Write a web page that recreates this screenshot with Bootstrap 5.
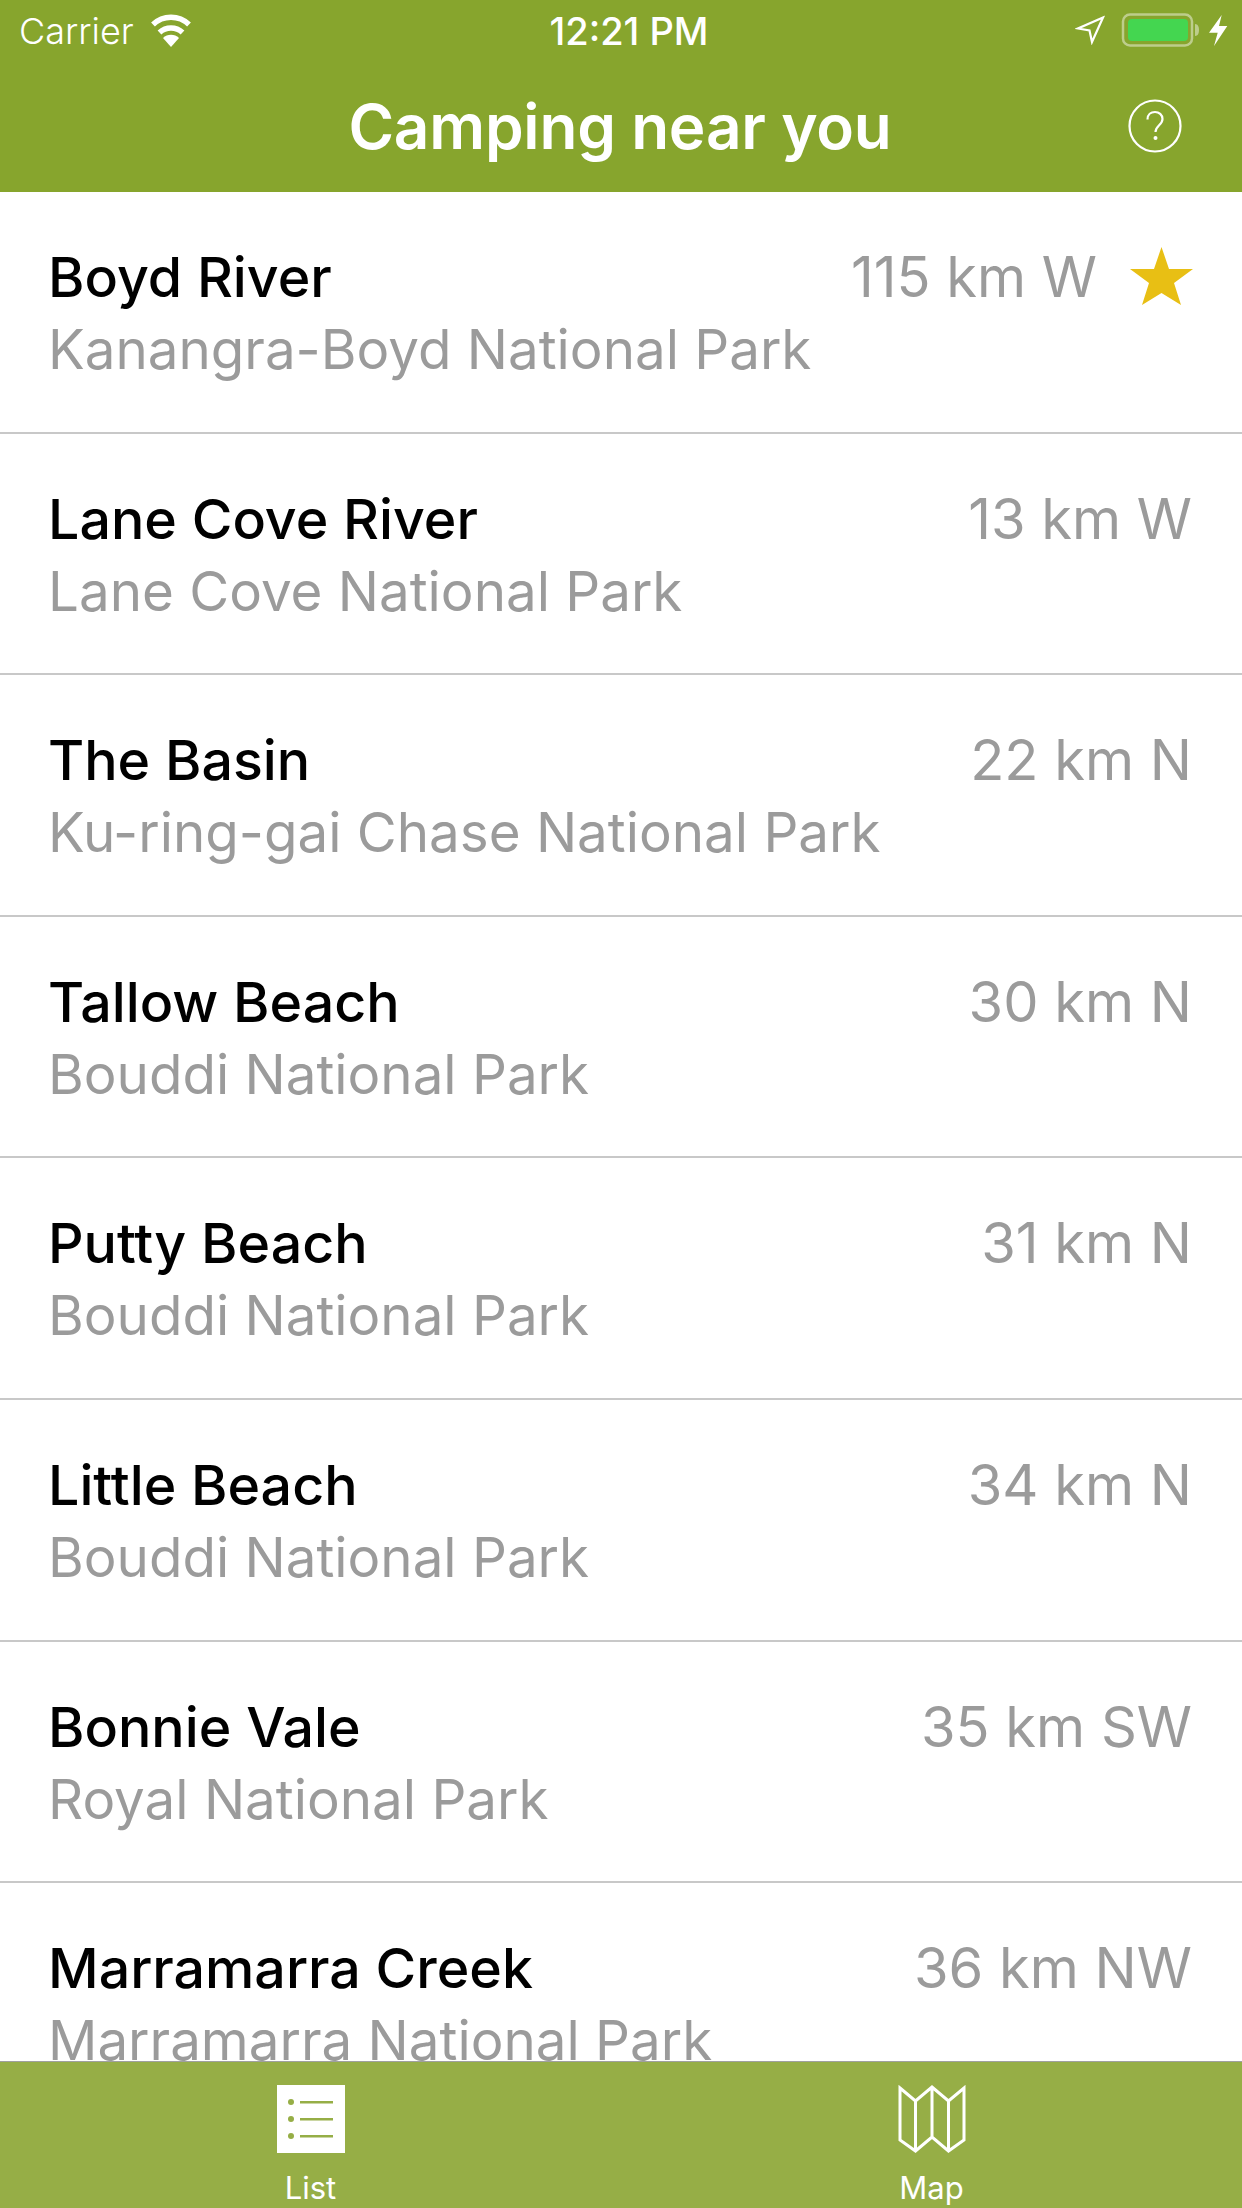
<!DOCTYPE html>
<html lang="en">
<head>
    <meta charset="UTF-8">
    <title>Camping near you</title>
    <link href="https://cdn.jsdelivr.net/npm/bootstrap@5.3.0/dist/css/bootstrap.min.css" rel="stylesheet">
    <style>
        body { font-family: Inter, "Liberation Sans", sans-serif; background: #fff; }
        .phone-page { width: 1242px; height: 2208px; overflow: hidden; }
        .top-area { background: #87a52d; height: 192px; color: #fff; flex: none; }
        .status-line { height: 60px; padding: 0 14px 0 19px; line-height: 62px; }
        .status-side { width: 400px; }
        .status-carrier { font-weight: 300; font-size: 36px; padding-top: 2px; }
        .status-time { font-weight: 500; font-size: 38px; margin-left: 11px; padding-top: 2px; }
        .title-line { height: 132px; padding: 0 60px 0 0; }
        .page-title { font-size: 62px; font-weight: 600; margin: 2px 0 0 0; line-height: 1; flex: 1; text-align: center; padding-left: 112px; letter-spacing: -.2px; }
        .camp-list { flex: 1; min-height: 0; overflow: hidden; }
        .camp-row { height: 241.6px; padding: 0 50px 0 48px; border-bottom: 2px solid #c8c8c8; flex: none; }
        .camp-text { padding-top: 49px; }
        .camp-name { font-size: 55.5px; font-weight: 500; color: #000; line-height: 72px; }
        .camp-park { font-size: 54.7px; color: #9b9b9b; line-height: 72px; }
        .camp-dist { font-size: 56px; color: #9b9b9b; line-height: 72px; padding-top: 49px; }
        .camp-star { margin: 55px -1px 0 33px; }
        .tab-bar { background: #96ae46; height: 147px; flex: none; border-top: 1px solid #a0a0a0; color: #fff; }
        .tab-item { flex: 1; padding-top: 23px; font-size: 31px; line-height: 1; }
        .tab-label { margin-top: 19px; }
    </style>
</head>
<body>
    <div class="phone-page d-flex flex-column">
        <div class="top-area">
            <div class="status-line d-flex justify-content-between align-items-center">
                <div class="status-side d-flex align-items-center gap-3">
                    <span class="status-carrier">Carrier</span>
                    <svg width="42" height="35" viewBox="0 0 42 35"><path d="M21 34l-8-9a11.500 11.500 0 0 1 16 0z" fill="#fff"/><path d="M9.500 19.500a17 17 0 0 1 23 0M3 11.500a26 26 0 0 1 36 0" fill="none" stroke="#fff" stroke-width="5.500"/></svg>
                </div>
                <span class="status-time">12:21 PM</span>
                <div class="status-side d-flex align-items-center justify-content-end">
                    <svg width="30" height="30" viewBox="0 0 30 30" class="me-3"><path d="M28 2.500L3 13.500l11.500 2 2.500 11.500z" fill="none" stroke="#fff" stroke-width="2.200"/></svg>
                    <svg width="80" height="34" viewBox="0 0 80 34"><rect x="2" y="1.500" width="69" height="31" rx="7" fill="none" stroke="#fff" stroke-opacity=".45" stroke-width="2.500"/><rect x="7" y="6" width="60" height="22" rx="4" fill="#44d650"/><path d="M74 11c3 0 4 3 4 6s-1 6-4 6z" fill="#fff" fill-opacity=".45"/></svg>
                    <svg width="19" height="31" viewBox="0 0 19 31" class="ms-2"><path d="M12.700 0L0 17.700h8.700L5 31l13.300-20H10z" fill="#fff"/></svg>
                </div>
            </div>
            <div class="title-line d-flex align-items-center">
                <h1 class="page-title">Camping near you</h1>
                <svg width="54" height="54" viewBox="0 0 54 54"><circle cx="27" cy="27" r="25.500" fill="none" stroke="#fff" stroke-width="2.200"/><path d="M19.500 20.500c0-5 3.500-7.500 7.500-7.500s7.500 2.800 7.500 7c0 6-7 6.500-7 13" fill="none" stroke="#fff" stroke-width="2.200"/><circle cx="27.500" cy="39" r="2" fill="#fff"/></svg>
            </div>
        </div>

        <div class="camp-list d-flex flex-column" id="campList"></div>

        <div class="tab-bar d-flex text-center">
            <div class="tab-item">
                <svg width="68" height="68" viewBox="0 0 68 68" class="d-block mx-auto"><rect width="68" height="68" fill="#fff"/><g fill="#96ae46"><circle cx="14" cy="17" r="3"/><circle cx="14" cy="34" r="3"/><circle cx="14" cy="51" r="3"/><rect x="23" y="16" width="33" height="2.500"/><rect x="23" y="33" width="33" height="2.500"/><rect x="23" y="50" width="33" height="2.500"/></g></svg>
                <div class="tab-label">List</div>
            </div>
            <div class="tab-item">
                <svg width="68" height="68" viewBox="0 0 68 68" class="d-block mx-auto"><path d="M2 3l15.500 13L34 2l16.500 14L66 3v52L50.500 66 34 52 17.500 66 2 55zM17.500 16v50M34 2v50M50.500 16v50" fill="none" stroke="#fff" stroke-width="3"/></svg>
                <div class="tab-label">Map</div>
            </div>
        </div>
    </div>

    <script>
        const camps = [
            ["Boyd River", "Kanangra-Boyd National Park", "115 km W", true],
            ["Lane Cove River", "Lane Cove National Park", "13 km W"],
            ["The Basin", "Ku-ring-gai Chase National Park", "22 km N"],
            ["Tallow Beach", "Bouddi National Park", "30 km N"],
            ["Putty Beach", "Bouddi National Park", "31 km N"],
            ["Little Beach", "Bouddi National Park", "34 km N"],
            ["Bonnie Vale", "Royal National Park", "35 km SW"],
            ["Marramarra Creek", "Marramarra National Park", "36 km NW"]
        ];
        const star = '<svg class="camp-star" width="63" height="58" viewBox="0 0 63 58"><path d="M31.500 0l7.500 22h24L44 36l7 22-19.500-12L12 58l7-22L0 22h24z" fill="#e8bf14"/></svg>';
        document.getElementById("campList").innerHTML = camps.map(c =>
            '<div class="camp-row d-flex justify-content-between">' +
            '<div class="camp-text"><div class="camp-name">' + c[0] + '</div><div class="camp-park">' + c[1] + '</div></div>' +
            '<div class="d-flex align-items-start"><div class="camp-dist">' + c[2] + '</div>' + (c[3] ? star : '') + '</div>' +
            '</div>'
        ).join("");
    </script>
    <script src="https://cdn.jsdelivr.net/npm/bootstrap@5.3.0/dist/js/bootstrap.bundle.min.js"></script>
</body>
</html>
